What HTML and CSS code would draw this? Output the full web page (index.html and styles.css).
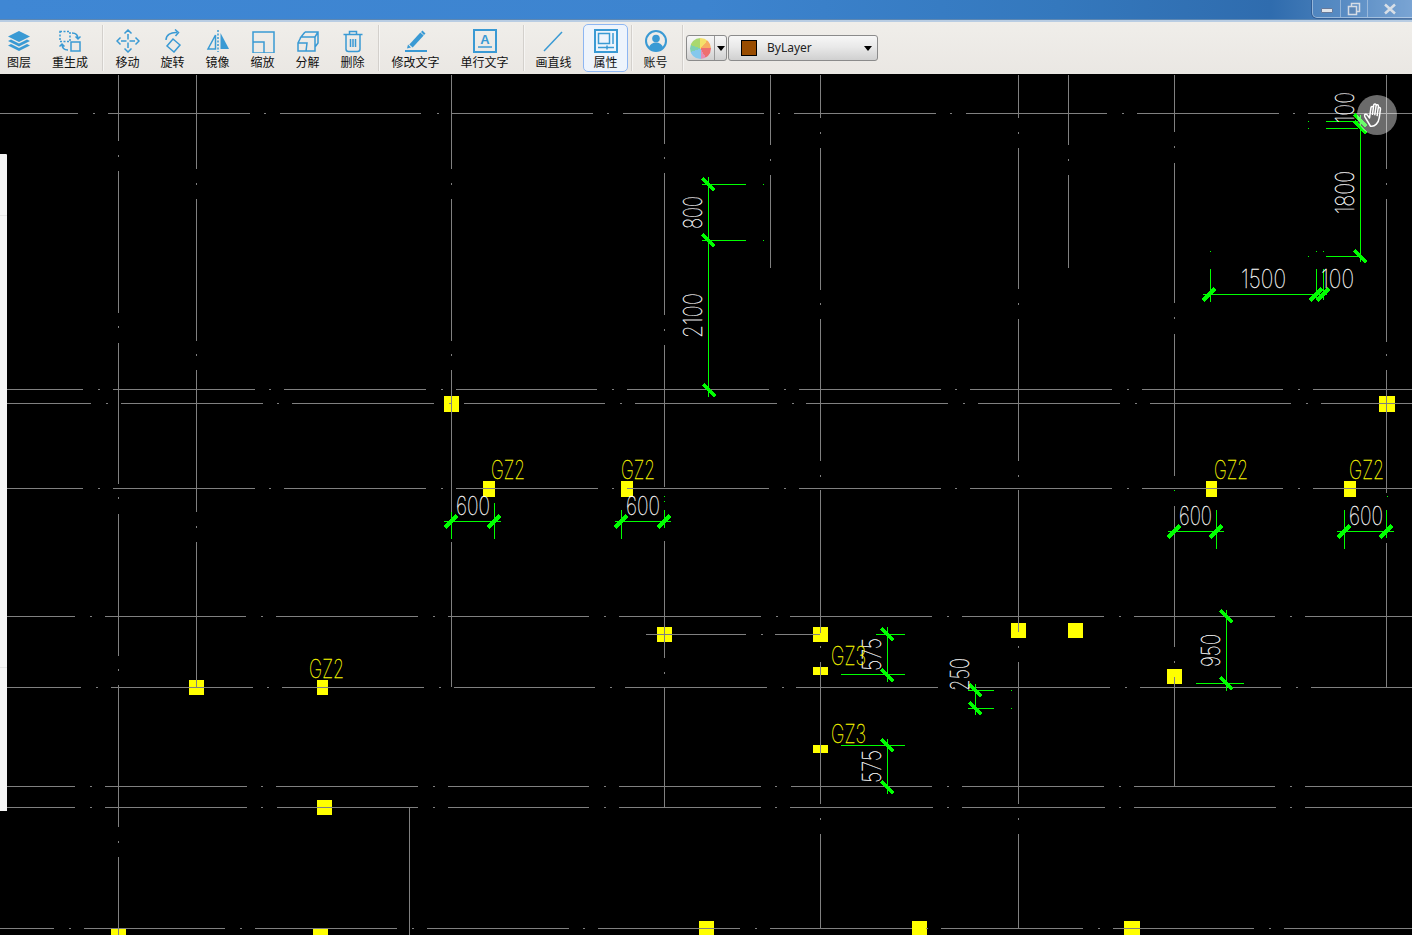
FILE: index.html
```html
<!DOCTYPE html>
<html lang="zh">
<head>
<meta charset="utf-8">
<title>CAD</title>
<link rel="stylesheet" href="styles.css">
</head>
<body>
<header class="titlebar">
  <div class="winbtns">
    <span class="winbtn min"><i class="min-glyph"></i></span>
    <span class="winbtn restore"><svg width="14" height="14" viewBox="0 0 14 14"><rect x="4.500" y="1.500" width="8" height="8" class="win-glyph"/><rect x="1.500" y="4.500" width="8" height="8" class="win-glyph fillb"/></svg></span>
    <span class="winbtn close"><svg width="14" height="12" viewBox="0 0 14 12"><path d="M2 1.500l10 9M12 1.500l-10 9" class="win-x"/></svg></span>
  </div>
</header>
<nav class="toolbar">
  <button class="tool w38"><svg viewBox="0 0 24 24" class="ic"><path class="f" d="M12 2 1 7.500 12 13l11-5.500z"/><path class="f" d="M1 12l3-1.500 8 4 8-4 3 1.500-11 5.500z"/><path class="f" d="M1 16.500l3-1.500 8 4 8-4 3 1.500L12 22z"/></svg><span>图层</span></button>
  <button class="tool w64"><svg viewBox="0 0 24 24" class="ic"><rect class="s d" x="2" y="2.500" width="10" height="10"/><rect class="s" x="13" y="13" width="9" height="9"/><path class="s" d="M14 4c4 0 6 2 6 6M17.500 7.500 20 10l2.500-2.500M10 21c-4 0-6-2-6-6M1.500 17.500 4 15l2.500 2.500"/></svg><span>重生成</span></button>
  <i class="sep m0"></i>
  <button class="tool w45"><svg viewBox="0 0 24 24" class="ic"><path class="s" d="M12 5v5.500M12 13.500V19M5 12h5.500M13.500 12H19M8.500 4.500 12 1l3.500 3.500M8.500 19.500 12 23l3.500-3.500M4.500 8.500 1 12l3.500 3.500M19.500 8.500 23 12l-3.500 3.500"/></svg><span>移动</span></button>
  <button class="tool w45"><svg viewBox="0 0 24 24" class="ic"><path class="s" d="M12 10l7 6-6 7-7-6zM5 11c0-5 5-8 11-7.500M14 .5l3.500 3-3 3.500"/></svg><span>旋转</span></button>
  <button class="tool w45"><svg viewBox="0 0 24 24" class="ic"><path class="s" d="M9.500 6v14H2z"/><path class="s d" d="M12 1v22"/><path class="f" d="M14.500 4 23 20h-8.500z"/></svg><span>镜像</span></button>
  <button class="tool w45"><svg viewBox="0 0 24 24" class="ic"><path class="s" d="M2 3h21v21H2z M2 13h11v11"/></svg><span>缩放</span></button>
  <button class="tool w45"><svg viewBox="0 0 24 24" class="ic"><path class="s" d="M9 3h13v11l-3 4M9 3 5 8h14l3-5M19 8v10M5 8 2 14v8h8l1-8H2M10 22h9v-4"/></svg><span>分解</span></button>
  <button class="tool w45"><svg viewBox="0 0 24 24" class="ic"><path class="s" d="M2.500 5.500h19M8.500 5V2.500h7V5M5 6v14a2.500 2.500 0 0 0 2.500 2.500h9A2.500 2.500 0 0 0 19 20V6M9.500 10v8M12 10v8M14.500 10v8"/></svg><span>删除</span></button>
  <i class="sep m3z"></i>
  <button class="tool w69 ml2"><svg viewBox="0 0 24 24" class="ic"><path class="fat" d="M7 17 18 5"/><path class="f" d="M3 19.500l1-4 3 3zM17 3l1.500-1.500 3 3L20 6z"/><path class="u" d="M1 22h22"/></svg><span>修改文字</span></button>
  <button class="tool w69"><svg viewBox="0 0 24 24" class="ic"><rect class="s t" x="1" y="1" width="22" height="22"/><text x="12" y="14.500" class="ic-a">A</text><path class="s" d="M5 18h14"/></svg><span>单行文字</span></button>
  <i class="sep m4"></i>
  <button class="tool w59"><svg viewBox="0 0 24 24" class="ic"><path class="s" d="M2 22 20 3"/></svg><span>画直线</span></button>
  <button class="tool w45 active"><svg viewBox="0 0 24 24" class="ic"><rect class="s t" x="1" y="1" width="22" height="22"/><rect class="s" x="4.500" y="4.500" width="11" height="10"/><path class="s" d="M19 4v11M4 18.500h16M13 16.500v4"/></svg><span>属性</span></button>
  <i class="sep m3z"></i>
  <button class="tool w47"><svg viewBox="0 0 24 24" class="ic"><circle class="s t" cx="12" cy="12" r="10"/><circle class="f" cx="12" cy="9.500" r="3.800"/><path class="f" d="M5 18.500c1-3.500 4-5 7-5s6 1.500 7 5c-1.800 2-4.300 3-7 3s-5.200-1-7-3z"/></svg><span>账号</span></button>
  <i class="sep m3"></i>
  <div class="palette"><i class="wheel"></i><i class="pal-div"></i><i class="arrow"></i></div>
  <div class="layer"><i class="swatch"></i><span class="layer-name">ByLayer</span><i class="arrow"></i></div>
</nav>
<main class="canvas">
  <svg class="drawing" width="1412" height="861" viewBox="0 74 1412 861">
    <g class="yel">
      <rect x="444" y="396" width="15" height="16"/><rect x="1379" y="396" width="16" height="16"/>
      <rect x="483" y="481" width="12" height="16"/><rect x="621" y="481" width="12" height="16"/><rect x="1206" y="481" width="11" height="16"/><rect x="1344" y="481" width="12" height="16"/>
      <rect x="657" y="627" width="15" height="15"/><rect x="813" y="627" width="15" height="15"/><rect x="813" y="667" width="15" height="8"/><rect x="813" y="745" width="15" height="8"/>
      <rect x="1011" y="623" width="15" height="15"/><rect x="1068" y="623" width="15" height="15"/><rect x="1167" y="669" width="15" height="15"/>
      <rect x="189" y="680" width="15" height="15"/><rect x="317" y="680" width="11" height="15"/><rect x="317" y="800" width="15" height="15"/>
      <rect x="111" y="929" width="15" height="8"/><rect x="313" y="929" width="15" height="8"/><rect x="699" y="921" width="15" height="16"/><rect x="912" y="921" width="15" height="16"/><rect x="1124" y="921" width="16" height="16"/>
    </g>
    <path class="gray" d="M0 113.500H78M93 113.500h2M108 113.500H250M264 113.500h2M280 113.500H421M437 113.500h2M451 113.500H593M607 113.500h2M623 113.500H764M778 113.500h2M794 113.500H936M950 113.500h2M966 113.500H1107M1122 113.500h2M1137 113.500H1279M1293 113.500h2M1308 113.500H1412"/>
    <path class="gray" d="M7 389.500H83M98 389.500h2M113 389.500H255M269 389.500h2M284 389.500H426M441 389.500h2M456 389.500H597M612 389.500h2M627 389.500H769M784 389.500h2M799 389.500H941M955 389.500h2M970 389.500H1112M1127 389.500h2M1142 389.500H1283M1298 389.500h2M1313 389.500H1412"/>
    <path class="gray" d="M7 403.500H91M106 403.500h2M121 403.500H263M277 403.500h2M292 403.500H434M449 403.500h2M464 403.500H605M620 403.500h2M635 403.500H777M792 403.500h2M806 403.500H948M963 403.500h2M978 403.500H1120M1135 403.500h2M1150 403.500H1291M1306 403.500h2M1321 403.500H1412"/>
    <path class="gray" d="M7 488.500H83M98 488.500h2M113 488.500H255M269 488.500h2M284 488.500H426M441 488.500h2M456 488.500H598M612 488.500h2M627 488.500H769M784 488.500h2M799 488.500H941M955 488.500h2M970 488.500H1112M1127 488.500h2M1142 488.500H1283M1298 488.500h2M1313 488.500H1412"/>
    <path class="gray" d="M7 616.500H75M90 616.500h2M105 616.500H246M261 616.500h2M276 616.500H418M433 616.500h2M448 616.500H589M604 616.500h2M619 616.500H761M776 616.500h2M790 616.500H932M947 616.500h2M962 616.500H1104M1119 616.500h2M1134 616.500H1275M1290 616.500h2M1305 616.500H1412"/>
    <path class="gray" d="M646 634.500H746M761 634.500h2M775 634.500H820"/>
    <path class="gray" d="M7 687.500H81M96 687.500h2M111 687.500H253M267 687.500h2M282 687.500H424M439 687.500h2M454 687.500H595M610 687.500h2M625 687.500H767M782 687.500h2M796 687.500H938M953 687.500h2M968 687.500H1110M1125 687.500h2M1140 687.500H1281M1296 687.500h2M1311 687.500H1412"/>
    <path class="gray" d="M7 786.500H75M90 786.500h2M105 786.500H247M261 786.500h2M276 786.500H418M433 786.500h2M448 786.500H589M604 786.500h2M619 786.500H761M775 786.500h2M791 786.500H932M947 786.500h2M962 786.500H1104M1119 786.500h2M1134 786.500H1275M1290 786.500h2M1305 786.500H1412"/>
    <path class="gray" d="M7 807.500H75M90 807.500h2M105 807.500H247M261 807.500h2M277 807.500H418M433 807.500h2M448 807.500H589M604 807.500h2M619 807.500H761M775 807.500h2M790 807.500H933M947 807.500h2M962 807.500H1105M1119 807.500h2M1134 807.500H1276M1290 807.500h2M1305 807.500H1412"/>
    <path class="gray" d="M0 928.500H54M69 928.500h2M84 928.500H225M240 928.500h2M255 928.500H397M412 928.500h2M427 928.500H569M583 928.500h2M598 928.500H740M755 928.500h2M770 928.500H912M926 928.500h2M941 928.500H1083M1098 928.500h2M1113 928.500H1254M1269 928.500h2M1284 928.500H1412"/>
    <path class="gray" d="M118.500 75V141M118.500 155v2M118.500 171V313M118.500 326v2M118.500 343V484M118.500 497v2M118.500 514V656M118.500 669v2M118.500 685V827M118.500 841v2M118.500 857V935"/>
    <path class="gray" d="M196.500 75V169M196.500 183v2M196.500 199V341M196.500 354v2M196.500 370V512M196.500 526v2M196.500 542V687"/>
    <path class="gray" d="M409.500 807V935"/>
    <path class="gray" d="M451.500 75V169M451.500 183v2M451.500 199V341M451.500 354v2M451.500 370V512M451.500 542V687"/>
    <path class="gray" d="M664.500 75V144M664.500 157v2M664.500 173V315M664.500 329v2M664.500 345V487M664.500 541V658M664.500 672v2M664.500 687V807"/>
    <path class="gray" d="M770.500 75V145M770.500 159v2M770.500 175V268"/>
    <path class="gray" d="M820.500 75V118M820.500 132v2M820.500 148V290M820.500 303v2M820.500 319V461M820.500 475v2M820.500 490V633M820.500 646v2M820.500 662V804M820.500 818v2M820.500 834V928"/>
    <path class="gray" d="M1018.500 75V118M1018.500 132v2M1018.500 148V289M1018.500 303v2M1018.500 319V461M1018.500 475v2M1018.500 490V632M1018.500 646v2M1018.500 662V804M1018.500 818v2M1018.500 834V928"/>
    <path class="gray" d="M1068.500 75V145M1068.500 159v2M1068.500 175V268"/>
    <path class="gray" d="M1174.500 75V132M1174.500 146v2M1174.500 163V303M1174.500 317v2M1174.500 334V476M1174.500 506V647M1174.500 661v2M1174.500 677V786"/>
    <path class="gray" d="M1386.500 75V169M1386.500 183v2M1386.500 199V342M1386.500 354v2M1386.500 370V493M1386.500 543V687"/>
    <path class="grn" d="M708.500 177V397M702 184.500H746M702 240.500H746M763 184.500h1M763 240.500h1"/>
    <path class="grn" d="M1360.500 115V262M1326 121.500H1358M1326 128.500H1358M1326 256.500H1358M1308 121.500h1M1308 128.500h1M1308 256.500h1M1210 251.500h1M1316 251.500h1M1323 251.500h1"/>
    <path class="grn" d="M1203 294.500H1327M1210.500 269V302M1316.500 269V300M1323.500 269V300"/>
    <path class="grn" d="M444 521.500H501M451.500 512V539M494.500 503V539"/>
    <path class="grn" d="M615 521.500H671M621.500 510V539M664.500 510V528M664.500 496v1M664.500 501v1"/>
    <path class="grn" d="M1168 531.500H1224M1216.500 510V549M1174.500 490v1"/>
    <path class="grn" d="M1337 531.500H1394M1344.500 510V549M1386.500 510V538M1387.500 496v1"/>
    <path class="grn" d="M887.500 627V682M876 634.500H905M841 674.500H905"/>
    <path class="grn" d="M887.500 739V794M841 745.500H905"/>
    <path class="grn" d="M975.500 684V715M968 690.500H994M968 708.500H994M1011 690.500h1M1011 708.500h1"/>
    <path class="grn" d="M1226.500 610V691M1196 683.500H1244"/>
    <path class="tick" d="M445 527.500l12-12M488 527.500l12-12M615 527.500l12-12M658 527.500l12-12M1168 537.500l12-12M1210 537.500l12-12M1338 537.500l12-12M1380 537.500l12-12M1203 300.500l12-12M1310 300.500l12-12M1317 300.500l12-12"/>
    <path class="tick" d="M702.500 178.500l12 12M702.500 234.500l12 12M703.500 384.500l12 12M1354.500 114.500l12 12M1354.500 121.500l12 12M1354.500 250.500l12 12M881.500 628.500l12 12M881.500 669.500l12 12M881.500 739.500l12 12M881.500 781.500l12 12M969.500 684.500l12 12M969.500 702.500l12 12M1220.500 610.500l12 12M1220.500 677.500l12 12"/>
    <g class="cad w">
      <text x="702" y="229" transform="rotate(-90 702 229)" textLength="33" lengthAdjust="spacingAndGlyphs">800</text>
      <text x="702" y="338" transform="rotate(-90 702 338)" textLength="45" lengthAdjust="spacingAndGlyphs">2100</text>
      <text x="1354" y="123" transform="rotate(-90 1354 123)" textLength="31" lengthAdjust="spacingAndGlyphs">100</text>
      <text x="1354" y="214" transform="rotate(-90 1354 214)" textLength="43" lengthAdjust="spacingAndGlyphs">1800</text>
      <text x="1241" y="288" textLength="45" lengthAdjust="spacingAndGlyphs">1500</text>
      <text x="1321" y="288" textLength="33" lengthAdjust="spacingAndGlyphs">100</text>
      <text x="456" y="515" textLength="34" lengthAdjust="spacingAndGlyphs">600</text>
      <text x="626" y="515" textLength="34" lengthAdjust="spacingAndGlyphs">600</text>
      <text x="1179" y="525" textLength="33" lengthAdjust="spacingAndGlyphs">600</text>
      <text x="1349" y="525" textLength="34" lengthAdjust="spacingAndGlyphs">600</text>
      <text x="881" y="671" transform="rotate(-90 881 671)" textLength="33" lengthAdjust="spacingAndGlyphs">575</text>
      <text x="881" y="783" transform="rotate(-90 881 783)" textLength="33" lengthAdjust="spacingAndGlyphs">575</text>
      <text x="969" y="691" transform="rotate(-90 969 691)" textLength="33" lengthAdjust="spacingAndGlyphs">250</text>
      <text x="1220" y="667" transform="rotate(-90 1220 667)" textLength="33" lengthAdjust="spacingAndGlyphs">950</text>
    </g>
    <g class="cad y">
      <text x="491" y="479" textLength="34" lengthAdjust="spacingAndGlyphs">GZ2</text>
      <text x="621" y="479" textLength="34" lengthAdjust="spacingAndGlyphs">GZ2</text>
      <text x="1214" y="479" textLength="34" lengthAdjust="spacingAndGlyphs">GZ2</text>
      <text x="1349" y="479" textLength="35" lengthAdjust="spacingAndGlyphs">GZ2</text>
      <text x="309" y="678" textLength="35" lengthAdjust="spacingAndGlyphs">GZ2</text>
      <text x="831" y="665" textLength="35" lengthAdjust="spacingAndGlyphs">GZ3</text>
      <text x="831" y="743" textLength="35" lengthAdjust="spacingAndGlyphs">GZ3</text>
    </g>
    <circle class="knob" cx="1377" cy="115" r="20"/>
    <path class="hand" transform="rotate(8 1377 115)" d="M1372 127c-2-3-5-6-7-9-1-2 1-3 2.500-1.500l2.500 2.500V108.500a1.200 1.200 0 0 1 2.400 0V115V105.500a1.200 1.200 0 0 1 2.400 0V115V106a1.200 1.200 0 0 1 2.400 0V115.500V108.500a1.200 1.200 0 0 1 2.400 0v9c0 5-3 9.500-7 9.500z"/>
  </svg>
  <aside class="sidepanel"><i class="rule r1"></i><i class="rule r2"></i></aside>
</main>
</body>
</html>
```

FILE: styles.css
```css
* { box-sizing: border-box; }
html, body { margin: 0; height: 100%; overflow: hidden; background: #000; }
body { width: 1412px; height: 935px; display: flex; flex-direction: column; font-family: "Noto Sans CJK SC", "Noto Sans", sans-serif; }

.titlebar {
  height: 22px; flex: none; display: flex; justify-content: flex-end; align-items: flex-start;
  background: linear-gradient(90deg, #3f87d4 0%, #3d84cf 50%, #3478bd 75%, #2f6cae 90%, #4a80ba 95%, #7ba4d2 100%);
  border-bottom: 2px solid #b9cde3;
  box-shadow: inset 0 -1px 0 #5d87b2;
}
.winbtns {
  width: 100px; height: 18px; display: flex;
  border: 1px solid rgba(255,255,255,.4); border-top: 0; border-right: 0;
  border-bottom-left-radius: 5px;
  background: rgba(120,165,215,.3);
  box-shadow: -1px 0 0 rgba(30,60,110,.45), 0 1px 0 rgba(30,60,110,.45);
}
.winbtn { display: flex; align-items: center; justify-content: center; border-right: 1px solid rgba(255,255,255,.35); }
.winbtn.min { width: 28px; }
.winbtn.restore { width: 27px; }
.winbtn.close { flex: 1; border-right: 0; }
.min-glyph { display: block; width: 12px; height: 5px; background: #dfe4ea; border: 1px solid #66799a; border-radius: 1px; margin-top: 3px; }
.win-glyph { fill: none; stroke: #d5dce5; stroke-width: 1.500; }
.fillb { fill: #5d88b8; }
.win-x { fill: none; stroke: #d8dfe7; stroke-width: 2.500; }

.toolbar {
  height: 52px; flex: none; display: flex; align-items: center;
  background: linear-gradient(180deg, #f0eeea 0%, #eae7e3 100%);
}
.tool {
  height: 48px; padding: 4px 0 0; margin: 0; border: 1px solid transparent; border-radius: 5px; background: none;
  display: flex; flex-direction: column; align-items: center; flex: none;
  font: 12px/14px "Noto Sans CJK SC", sans-serif; color: #111;
}
.tool span { display: block; margin-top: 2px; white-space: nowrap; }
.w38 { width: 38px; } .w45 { width: 45px; } .w47 { width: 47px; } .w59 { width: 59px; } .w64 { width: 64px; } .w69 { width: 69px; }
.ml2 { margin-left: 2px; }
.active { background: #eef4fc; border-color: #8db6f2; }
.ic { width: 24px; height: 24px; display: block; flex: none; }
.ic .f { fill: #3a9ad4; }
.ic .s { fill: none; stroke: #3a9ad4; stroke-width: 1.500; }
.ic .t { stroke-width: 2; }
.ic .d { stroke-dasharray: 2 1.500; }
.ic .fat { fill: none; stroke: #3a9ad4; stroke-width: 4.500; }
.ic .u { fill: none; stroke: #3a9ad4; stroke-width: 2; }
.ic-a { font: 700 13px "Liberation Sans", sans-serif; fill: #3a9ad4; text-anchor: middle; }

.sep { display: block; flex: none; width: 1px; height: 46px; background: #d3d0cc; box-shadow: 1px 0 0 #f6f5f3; margin-right: 1px; }
.m0 { margin-left: 0; margin-right: 2px; }
.m3 { margin-left: 3px; }
.m3z { margin-left: 3px; margin-right: 0; }
.m4 { margin-left: 4px; margin-right: 0; }

.palette, .layer {
  height: 26px; flex: none; display: flex; align-items: center; position: relative;
  border: 1px solid #8b8b8b; border-radius: 3px;
  background: linear-gradient(180deg, #f7f7f7 0%, #e9e9e9 45%, #d0d0d0 100%);
}
.palette { width: 41px; margin-left: 2px; padding-left: 3px; }
.wheel {
  display: block; width: 21px; height: 21px; border-radius: 50%; flex: none;
  background: conic-gradient(#f4e06a 0 40deg, #f7ad62 40deg 90deg, #ee6f6f 90deg 150deg, #e58db4 150deg 180deg, #84c8ec 180deg 250deg, #7fd0b0 250deg 290deg, #a9d86e 290deg 360deg);
}
.pal-div { display: block; width: 1px; height: 24px; background: #9a9a9a; margin-left: 3px; }
.arrow { display: block; width: 0; height: 0; border: 4px solid transparent; border-top: 5px solid #000; border-bottom: 0; }
.palette .arrow { margin-left: 2px; }
.layer { width: 150px; margin-left: 1px; padding-left: 12px; }
.swatch { display: block; width: 16px; height: 16px; background: #994c00; border: 1px solid #000; flex: none; }
.layer-name { font: 12px/16px "Noto Sans", sans-serif; color: #222; margin-left: 10px; }
.layer .arrow { margin-left: auto; margin-right: 5px; }

.canvas { position: relative; flex: 1; background: #000; overflow: hidden; }
.drawing { display: block; }
.yel rect { fill: #ffff00; }
.gray { fill: none; stroke: #808080; stroke-width: 1; shape-rendering: crispEdges; }
.grn { fill: none; stroke: #00ff00; stroke-width: 1; shape-rendering: crispEdges; }
.tick { fill: none; stroke: #00ff00; stroke-width: 4; shape-rendering: crispEdges; }
.cad text { font-family: Inter, "Liberation Sans", sans-serif; font-weight: 100; font-size: 26px; stroke-width: .3px; }
.cad.w text { fill: #fff; stroke: #fff; }
.cad.y text { fill: #ffff00; stroke: #ffff00; }
.knob { fill: rgba(255,255,255,.42); }
.hand { fill: none; stroke: #fff; stroke-width: 1.500; stroke-linejoin: round; }

.sidepanel { position: absolute; left: 0; top: 80px; width: 7px; height: 657px; background: #f5f5f5; border-top-right-radius: 1px; }
.rule { position: absolute; left: 0; width: 7px; height: 1px; background: #e6e6e6; }
.r1 { top: 61px; }
.r2 { top: 513px; }
```
